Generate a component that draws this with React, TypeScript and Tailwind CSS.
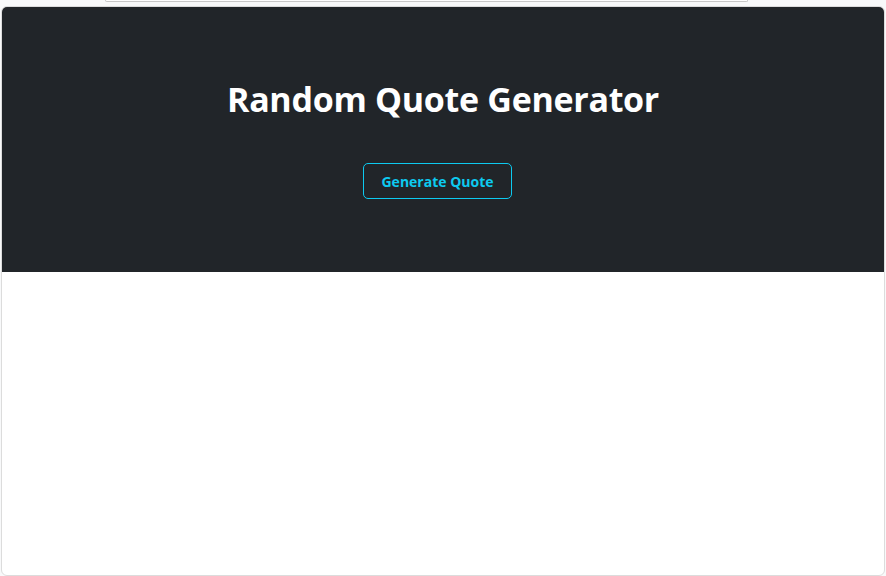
export default function App() {
  return (
    <div
      className="min-h-[576px] bg-[#f8f9fa] px-[1px]"
      style={{ fontFamily: '"Open Sans", "Noto Sans", sans-serif' }}
    >
      {/* bottom edge of element scrolled off above */}
      <div className="ml-[104px] mr-[137px] h-[2px] rounded-b-[6px] border-x border-b border-[#c8c8c8] bg-white" />

      <div className="mt-[4px] flex h-[570px] flex-col overflow-hidden rounded-[6px] border border-[#dcdcdc] bg-white">
        <section className="flex h-[265px] shrink-0 flex-col items-center bg-[#212529] pt-[70px]">
          <h1 className="text-[34px] font-bold leading-[44px] tracking-[-0.3px] text-white">
            Random Quote Generator
          </h1>
          <button className="mr-[11px] mt-[42px] h-[36px] rounded-[5px] border border-[#0dcaf0] px-[17px] text-[14px] font-bold text-[#0dcaf0]">
            Generate Quote
          </button>
        </section>
        <div className="flex-1" />
      </div>
    </div>
  );
}
